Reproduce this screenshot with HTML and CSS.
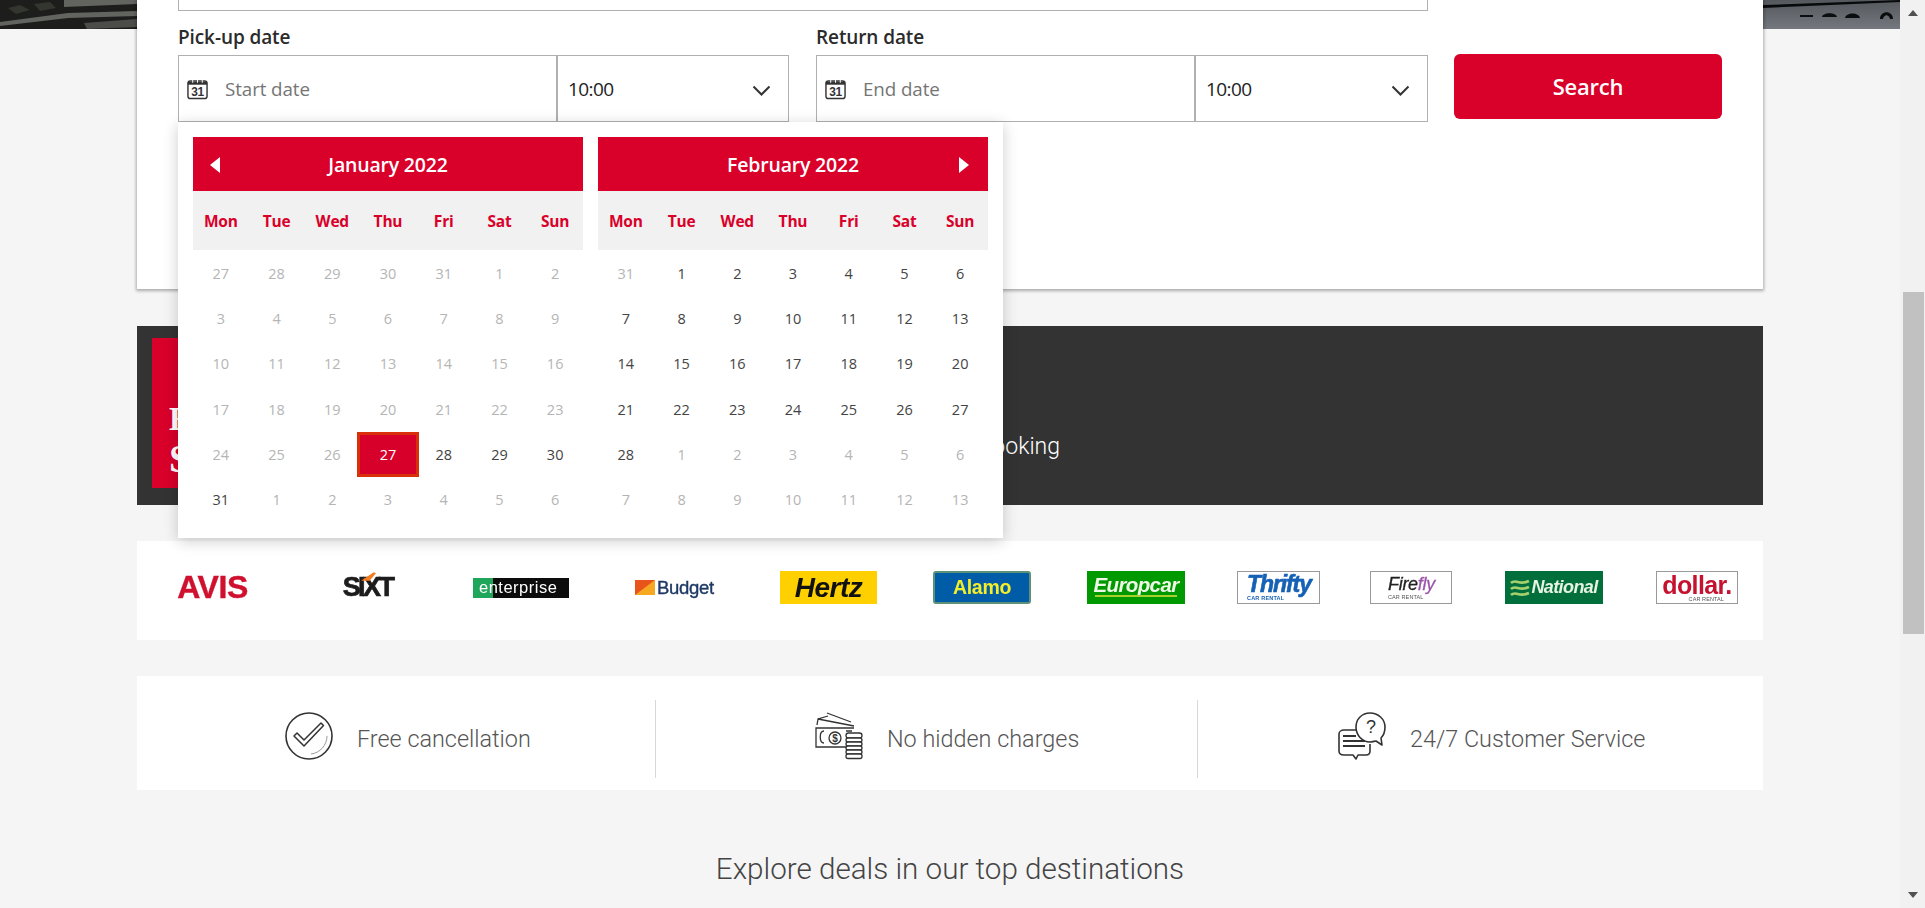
FILE: index.html
```html
<!DOCTYPE html>
<html lang="en">
<head>
<meta charset="utf-8">
<title>Car rental search</title>
<link rel="stylesheet" href="styles.css">
</head>
<body>
<div class="page">
  <main class="main">
    <svg class="hero" viewBox="0 0 1900 29" preserveAspectRatio="none" aria-hidden="true">
      <defs>
        <linearGradient id="heroRight" x1="0" y1="0" x2="0" y2="1"><stop offset="0" stop-color="#55585d"/><stop offset="1" stop-color="#74777d"/></linearGradient>
      </defs>
      <rect width="137" height="29" fill="#1d1e1c"/>
      <path d="M64 0h73v4l-73 3zM0 22l68-9 69-2v5l-69 2-68 8z" fill="#62645f"/>
      <path d="M84 23l53-4v8l-50 2z" fill="#4c4d49"/>
      <path d="M8 8l12-3 10 5-14 4zM34 4l16-2 6 6-16 3z" fill="#33352f"/>
      <rect x="1763" width="137" height="29" fill="url(#heroRight)"/>
      <path d="M1763 5l137-5v2l-137 6z" fill="#08090b"/>
      <path d="M1800 15h13v2h-13zM1822 17c1-5 14-5 15 0zM1845 18c1-6 14-6 15 0zM1880 19c0-9 13-9 13 0h-3c-1-5-6-5-7 0z" fill="#0c0d0f"/>
    </svg>

    <section class="card">
      <div class="location"></div>
      <form class="search-row">
        <div class="group">
          <div class="label">Pick-up date</div>
          <div class="field">
            <div class="date-input">
              <svg class="cal" viewBox="0 0 22 22" aria-hidden="true"><rect x="1" y="2.500" width="20" height="18.500" rx="2.500" fill="#fff" stroke="#333" stroke-width="1.500"/><path d="M1 3h20v3.500H1z" fill="#333"/><path d="M6 .5v4M11 .5v4M16 .5v4" stroke="#fff" stroke-width="1" fill="none"/><text x="11" y="18.500" text-anchor="middle" class="cal-num">31</text></svg>
              <span class="placeholder">Start date</span>
            </div>
            <div class="time-input">
              <span>10:00</span>
              <svg class="chev" viewBox="0 0 19 11" aria-hidden="true"><path d="M1.500 1.500l8 8 8-8" fill="none" stroke="#333" stroke-width="2"/></svg>
            </div>
          </div>
        </div>
        <div class="group group-return">
          <div class="label">Return date</div>
          <div class="field">
            <div class="date-input">
              <svg class="cal" viewBox="0 0 22 22" aria-hidden="true"><rect x="1" y="2.500" width="20" height="18.500" rx="2.500" fill="#fff" stroke="#333" stroke-width="1.500"/><path d="M1 3h20v3.500H1z" fill="#333"/><path d="M6 .5v4M11 .5v4M16 .5v4" stroke="#fff" stroke-width="1" fill="none"/><text x="11" y="18.500" text-anchor="middle" class="cal-num">31</text></svg>
              <span class="placeholder">End date</span>
            </div>
            <div class="time-input">
              <span>10:00</span>
              <svg class="chev" viewBox="0 0 19 11" aria-hidden="true"><path d="M1.500 1.500l8 8 8-8" fill="none" stroke="#333" stroke-width="2"/></svg>
            </div>
          </div>
        </div>
        <button class="search-btn" type="button">Search</button>
      </form>

      <div class="picker">
        <div class="month">
          <div class="month-head">
            <svg class="arrow arrow-prev" viewBox="0 0 10 16" aria-hidden="true"><path d="M10 0v16L0 8z" fill="#fff"/></svg>
            January 2022
          </div>
          <div class="dow"><span>Mon</span><span>Tue</span><span>Wed</span><span>Thu</span><span>Fri</span><span>Sat</span><span>Sun</span></div>
          <div class="days">
            <span>27</span><span>28</span><span>29</span><span>30</span><span>31</span><span>1</span><span>2</span>
            <span>3</span><span>4</span><span>5</span><span>6</span><span>7</span><span>8</span><span>9</span>
            <span>10</span><span>11</span><span>12</span><span>13</span><span>14</span><span>15</span><span>16</span>
            <span>17</span><span>18</span><span>19</span><span>20</span><span>21</span><span>22</span><span>23</span>
            <span>24</span><span>25</span><span>26</span><span class="sel">27</span><span class="on">28</span><span class="on">29</span><span class="on">30</span>
            <span class="on">31</span><span>1</span><span>2</span><span>3</span><span>4</span><span>5</span><span>6</span>
          </div>
        </div>
        <div class="month">
          <div class="month-head">
            February 2022
            <svg class="arrow arrow-next" viewBox="0 0 10 16" aria-hidden="true"><path d="M0 0v16L10 8z" fill="#fff"/></svg>
          </div>
          <div class="dow"><span>Mon</span><span>Tue</span><span>Wed</span><span>Thu</span><span>Fri</span><span>Sat</span><span>Sun</span></div>
          <div class="days">
            <span>31</span><span class="on">1</span><span class="on">2</span><span class="on">3</span><span class="on">4</span><span class="on">5</span><span class="on">6</span>
            <span class="on">7</span><span class="on">8</span><span class="on">9</span><span class="on">10</span><span class="on">11</span><span class="on">12</span><span class="on">13</span>
            <span class="on">14</span><span class="on">15</span><span class="on">16</span><span class="on">17</span><span class="on">18</span><span class="on">19</span><span class="on">20</span>
            <span class="on">21</span><span class="on">22</span><span class="on">23</span><span class="on">24</span><span class="on">25</span><span class="on">26</span><span class="on">27</span>
            <span class="on">28</span><span>1</span><span>2</span><span>3</span><span>4</span><span>5</span><span>6</span>
            <span>7</span><span>8</span><span>9</span><span>10</span><span>11</span><span>12</span><span>13</span>
          </div>
        </div>
      </div>
    </section>

    <section class="banner">
      <div class="promo"><span class="promo-e">E</span><span class="promo-s">S</span></div>
      <div class="promo-copy">booking</div>
    </section>

    <section class="logos">
      <div class="logo avis">AVIS</div>
      <div class="logo sixt">SIXT<svg class="sixt-mark" viewBox="0 0 16 8" aria-hidden="true"><path d="M1 8L13 0l2 1-6 7z" fill="#f47b20"/></svg></div>
      <div class="logo enterprise"><span class="ent-green"></span><span class="ent-text">enterprise</span></div>
      <div class="logo budget"><svg class="budget-mark" viewBox="0 0 20 15" aria-hidden="true"><rect width="20" height="15" fill="#f7a823"/><path d="M0 0h20L0 15z" fill="#e8541a"/></svg>Budget</div>
      <div class="logo hertz">Hertz</div>
      <div class="logo alamo">Alamo</div>
      <div class="logo europcar">Europcar</div>
      <div class="logo boxed thrifty"><span class="thrifty-name">Thrifty</span><span class="tiny thrifty-sub">CAR RENTAL</span></div>
      <div class="logo boxed firefly"><span class="firefly-name">Fire<i>fly</i></span><span class="tiny firefly-sub">CAR RENTAL</span></div>
      <div class="logo national"><svg class="nat-mark" viewBox="0 0 20 22" aria-hidden="true"><path d="M1 6c5-5 8 3 18-2M1 12c5-5 8 3 18-2M1 18c5-5 8 3 18-2" fill="none" stroke="#a6d16c" stroke-width="2.600"/></svg>National</div>
      <div class="logo boxed dollar"><span class="dollar-name">dollar.</span><span class="tiny dollar-sub">CAR RENTAL</span></div>
    </section>

    <section class="features">
      <div class="feature f1">
        <svg class="f-icon" viewBox="0 0 48 48" aria-hidden="true"><circle cx="24" cy="24" r="23" fill="none" stroke="#333" stroke-width="1.600"/><path d="M9 24l3-3 7 7 17-17 2.500 2.500L19 34z" fill="none" stroke="#333" stroke-width="1.500" stroke-linejoin="round"/><path d="M42 24c0 9-7 17-16 18" fill="none" stroke="#999" stroke-width="1"/></svg>
        <span>Free cancellation</span>
      </div>
      <div class="feature f2">
        <svg class="f-icon" viewBox="0 0 48 48" aria-hidden="true"><g fill="none" stroke="#333" stroke-width="1.300"><path d="M2 13l1-6 10-3M3 7l36 7M12 1l24 9"/><path d="M31 35H1V16h38"/><path d="M9 19c-5 0-5 12 0 12M31 19h6"/><circle cx="20" cy="26" r="6"/></g><text x="20" y="29.500" text-anchor="middle" class="money-sign">$</text><g fill="#fff" stroke="#333" stroke-width="1.300"><rect x="31" y="21" width="16" height="5" rx="2.500"/><rect x="31" y="26" width="16" height="4" rx="2"/><rect x="31" y="30" width="16" height="4" rx="2"/><rect x="31" y="34" width="16" height="4" rx="2"/><rect x="31" y="38" width="16" height="4" rx="2"/><rect x="31" y="42" width="16" height="4.500" rx="2"/></g></svg>
        <span>No hidden charges</span>
      </div>
      <div class="feature f3">
        <svg class="f-icon" viewBox="0 0 48 48" aria-hidden="true"><g fill="none" stroke="#333" stroke-width="1.600" stroke-linejoin="round"><path d="M18 18H6c-3 0-5 2-5 4v17c0 3 2 4 5 4h9l3 4 2-4h8c3 0 4-2 4-4v-7"/><path d="M32 1c-8 0-14 6-14 14s6 15 14 15c2 0 5-1 6-1l6 4-1-7c3-3 4-7 4-11C47 7 40 1 32 1z" fill="#fff"/><path d="M5 24h13M5 29h22M5 34h22" stroke-width="2"/></g><text x="33" y="21" text-anchor="middle" class="q-mark">?</text></svg>
        <span>24/7 Customer Service</span>
      </div>
    </section>

    <h2 class="deals">Explore deals in our top destinations</h2>
  </main>
  <aside class="scrollbar" aria-hidden="true">
    <div class="sb-up"></div>
    <div class="sb-thumb"></div>
    <div class="sb-down"></div>
  </aside>
</div>
</body>
</html>
```

FILE: styles.css
```css
* { box-sizing: border-box; }
html, body { margin: 0; height: 100%; overflow: hidden; }
body { background: #f5f5f5; font-family: "Open Sans", "Noto Sans", sans-serif; color: #333; }

.page { display: flex; width: 1925px; height: 908px; overflow: hidden; }
.main { position: relative; width: 1900px; height: 908px; flex: none; display: flex; flex-direction: column; align-items: center; overflow: hidden; }

.hero { position: absolute; left: 0; top: 0; width: 1900px; height: 29px; }

.card { position: relative; z-index: 2; width: 1626px; height: 289px; padding: 0 41px; background: #fff; box-shadow: 0 1px 3px 1px rgba(0,0,0,.3); flex: none; }
.location { width: 1250px; height: 11px; border: 1px solid #b0b0b0; border-top: 0; }

.search-row { display: flex; align-items: flex-start; }
.group { width: 611px; margin-right: 27px; flex: none; }
.group-return { width: 612px; margin-right: 26px; }
.label { height: 44px; padding-top: 14px; font-size: 19px; line-height: 24px; font-weight: 600; color: #2b2b2b; letter-spacing: -.1px; }
.field { display: flex; height: 67px; border: 1px solid #b0b0b0; background: #fff; }
.date-input { width: 377px; display: flex; align-items: center; gap: 17px; padding-left: 8px; }
.cal { width: 21px; height: 22px; flex: none; }
.cal-num { font-family: "Liberation Sans", sans-serif; font-size: 12.500px; font-weight: 700; fill: #333; letter-spacing: -.3px; }
.placeholder { font-size: 18.800px; letter-spacing: -.1px; color: #757575; }
.time-input { flex: 1; display: flex; align-items: center; justify-content: space-between; padding: 0 17px 0 10px; border-left: 2px solid #b0b0b0; font-size: 19px; letter-spacing: -.6px; color: #222; }
.chev { width: 19px; height: 11px; margin-top: 3px; }

.search-btn { width: 268px; height: 65px; margin-top: 43px; border: 0; border-radius: 6px; background: #d9002a; color: #fff; font: 600 22px "Open Sans", sans-serif; letter-spacing: -.2px; padding: 0 0 1px; }

.picker { position: absolute; left: 41px; top: 122px; z-index: 3; display: flex; gap: 15px; padding: 15px 15px 16px; background: #fff; box-shadow: 0 3px 14px rgba(0,0,0,.2); }
.month { width: 390px; }
.month-head { position: relative; height: 54px; display: flex; align-items: center; justify-content: center; background: #d9002a; color: #fff; font-size: 19.500px; font-weight: 600; letter-spacing: -.2px; }
.arrow { position: absolute; top: 20px; width: 10px; height: 16px; }
.arrow-prev { left: 17px; }
.arrow-next { right: 19px; }
.dow { display: grid; grid-template-columns: repeat(7, 1fr); height: 59px; align-items: center; background: #f1f1f1; color: #d9002a; font-size: 15.500px; font-weight: 700; text-align: center; letter-spacing: -.2px; }
.days { display: grid; grid-template-columns: repeat(7, 1fr); grid-auto-rows: 45.2px; margin-top: 1px; font-size: 14.500px; color: #b5b5b5; text-align: center; }
.days span { display: flex; align-items: center; justify-content: center; }
.days .on { color: #444; }
.days .sel { position: relative; z-index: 0; color: #fff; }
.days .sel::before { content: ""; position: absolute; z-index: -1; inset: 0 -3px; background: #d6002b; border: 3px solid #d9300b; }

.banner { position: relative; width: 1626px; height: 179px; margin-top: 37px; padding: 12px 15px 17px; display: flex; background: #333; flex: none; }
.promo { width: 300px; padding: 64px 0 0 17px; display: flex; flex-direction: column; background: linear-gradient(90deg, #d9002a, #c90027); color: #fff; font-family: "Liberation Serif", serif; font-weight: 700; flex: none; }
.promo-e { font-size: 33px; line-height: 34px; }
.promo-s { font-size: 40px; line-height: 44px; margin-top: 1px; }
.promo-copy { width: 608px; text-align: right; padding-top: 94px; font: 300 23px/30px Roboto, sans-serif; color: #fff; flex: none; }

.logos { width: 1626px; height: 99px; margin-top: 36px; display: flex; align-items: center; padding: 0 0 6px 38px; background: #fff; flex: none; }
.logo { flex: none; display: flex; align-items: center; justify-content: center; height: 33px; font-family: "Liberation Sans", sans-serif; font-weight: 700; white-space: nowrap; filter: blur(.35px); }
.boxed { flex-direction: column; border: 1px solid #999; background: #fff; position: relative; }
.tiny { font-size: 5.500px; font-weight: 400; letter-spacing: .1px; color: #555; line-height: 6px; }

.avis { width: 75px; color: #d0102f; font-size: 32px; letter-spacing: -.4px; -webkit-text-stroke: .4px #d0102f; }
.sixt { position: relative; width: 55px; margin-left: 90px; color: #1c1c1c; font-size: 27px; letter-spacing: -2.600px; -webkit-text-stroke: .7px #1c1c1c; }
.sixt-mark { position: absolute; left: 20px; top: 1px; width: 17px; height: 9px; }
.enterprise { position: relative; width: 96px; height: 20px; margin-left: 78px; background: #0c0c0c; color: #fff; font-weight: 400; font-size: 16.500px; justify-content: flex-start; }
.ent-green { width: 20px; height: 20px; background: #1ea65b; flex: none; }
.ent-text { margin-left: -14px; letter-spacing: .5px; }
.budget { width: 83px; margin-left: 64px; gap: 2px; color: #1f3a66; font-size: 18.500px; font-weight: 400; -webkit-text-stroke: .4px #1f3a66; letter-spacing: -.3px; }
.budget-mark { width: 20px; height: 15px; flex: none; }
.hertz { width: 97px; margin-left: 64px; background: #ffd000; color: #111; font-style: italic; font-size: 28px; letter-spacing: -.5px; }
.alamo { width: 98px; margin-left: 56px; border: 2px solid #5d9178; border-radius: 3px; background: #005ca6; color: #f4ee2a; font-size: 19.500px; letter-spacing: -.3px; }
.europcar { position: relative; width: 98px; margin-left: 56px; background: #009900; color: #eef9e6; font-style: italic; font-size: 20.500px; letter-spacing: -.6px; padding-bottom: 5px; }
.europcar::after { content: ""; position: absolute; left: 8px; right: 8px; bottom: 7px; height: 2px; background: #a5d22f; }
.thrifty { width: 83px; margin-left: 52px; color: #1561b5; align-items: flex-start; padding-left: 9px; }
.thrifty-name { font-size: 23px; line-height: 21px; font-style: italic; font-weight: 700; letter-spacing: -1.100px; -webkit-text-stroke: .6px #1561b5; }
.thrifty-sub { color: #1561b5; font-weight: 700; letter-spacing: .2px; }
.firefly { width: 82px; margin-left: 50px; color: #222; align-items: flex-start; padding-left: 17px; }
.firefly-name { font-size: 18px; line-height: 19px; font-style: italic; font-weight: 400; letter-spacing: -.3px; -webkit-text-stroke: .3px #222; }
.firefly-name i { color: #9a55a8; -webkit-text-stroke: .3px #9a55a8; }
.national { width: 98px; margin-left: 53px; gap: 1px; background: #006f3c; color: #e8f3e2; font-style: italic; font-size: 18px; letter-spacing: -.6px; }
.nat-mark { width: 20px; height: 22px; flex: none; }
.dollar { width: 82px; margin-left: 53px; color: #c4122f; }
.dollar-name { font-size: 25px; line-height: 22px; letter-spacing: -.6px; }
.dollar-sub { align-self: flex-end; margin-right: 13px; }

.features { width: 1626px; height: 114px; margin-top: 36px; padding: 24px 0 12px; display: grid; grid-template-columns: 518px 542px 1fr; background: #fff; flex: none; }
.feature { display: flex; align-items: center; gap: 24px; font: 300 23.400px Roboto, sans-serif; color: #555; white-space: nowrap; }
.f1 { padding-left: 148px; }
.f2 { padding-left: 159px; border-left: 1px solid #d8d8d8; }
.f3 { padding-left: 140px; border-left: 1px solid #d8d8d8; }
.f-icon { width: 48px; height: 48px; flex: none; margin-bottom: 6px; }
.money-sign { font-family: "Liberation Sans", sans-serif; font-size: 10px; font-weight: 700; fill: #333; }
.q-mark { font-family: "Liberation Sans", sans-serif; font-size: 18px; fill: #333; }

.deals { margin: 61px 0 0; font: 300 29.600px/36px Roboto, sans-serif; color: #444; flex: none; }

.scrollbar { position: relative; width: 25px; height: 908px; flex: none; display: flex; flex-direction: column; align-items: center; justify-content: space-between; padding: 10px 0; background: #f1f1f1; }
.sb-up { width: 0; height: 0; border: 5px solid transparent; border-top: 0; border-bottom: 6px solid #505050; }
.sb-down { width: 0; height: 0; border: 5px solid transparent; border-bottom: 0; border-top: 6px solid #505050; }
.sb-thumb { position: absolute; left: 3px; right: 1px; top: 292px; height: 342px; background: #c1c1c1; }
```
